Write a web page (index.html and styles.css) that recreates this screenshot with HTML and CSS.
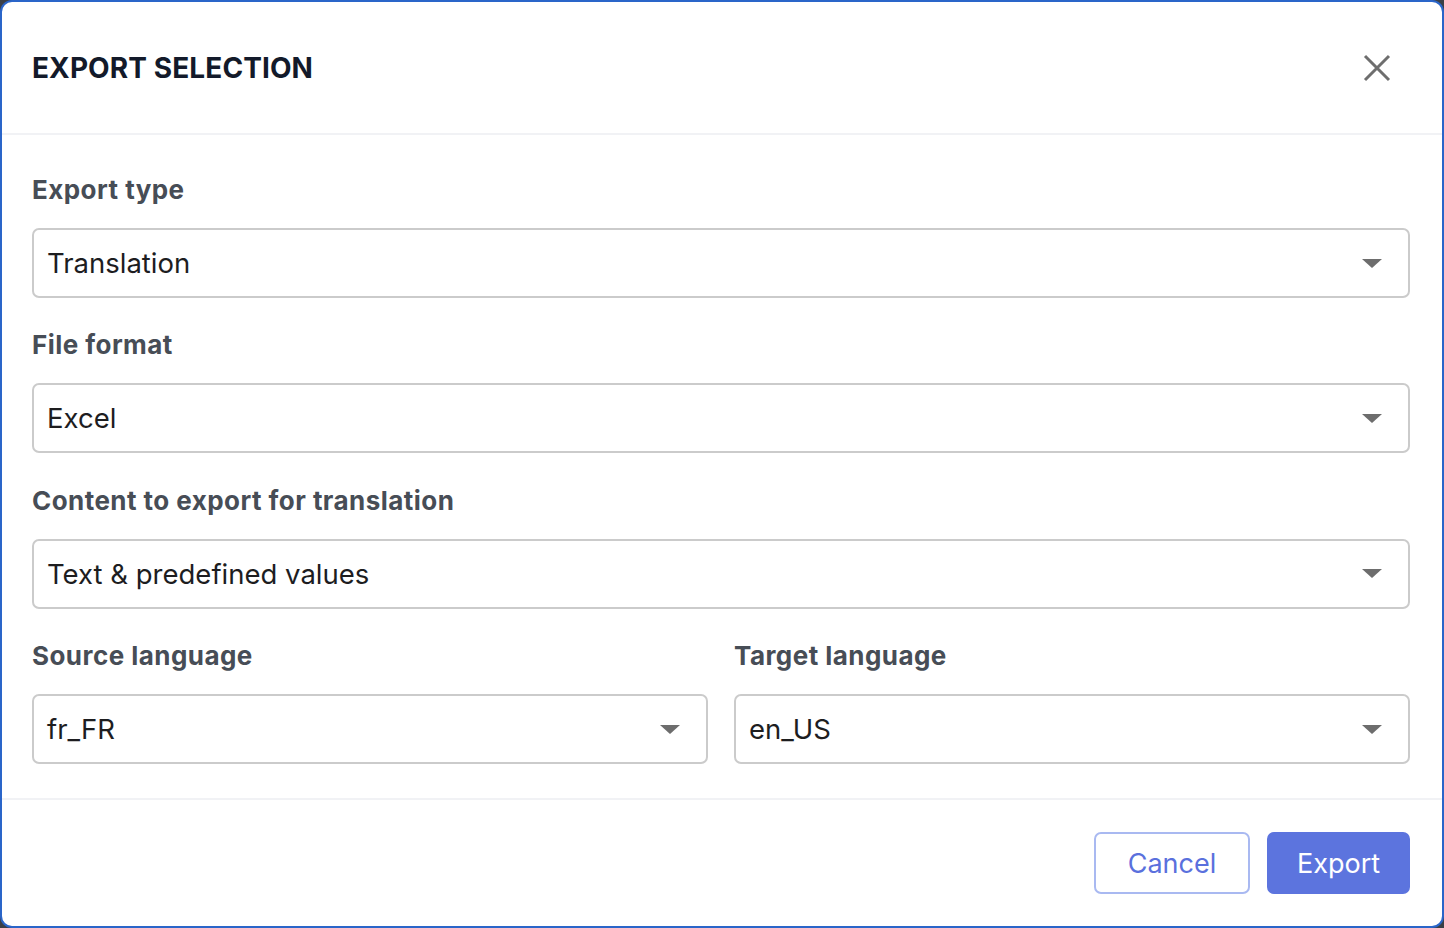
FILE: index.html
```html
<!DOCTYPE html>
<html lang="en">
<head>
<meta charset="utf-8">
<title>Export selection</title>
<link rel="stylesheet" href="styles.css">
</head>
<body>
<div class="dialog">
  <header class="dialog-header">
    <h1 class="dialog-title">EXPORT SELECTION</h1>
    <button class="close-btn" aria-label="Close">
      <svg width="28" height="28" viewBox="0 0 28 28"><path d="M2 2 L26 26 M26 2 L2 26" stroke="#6e6e6e" stroke-width="3" fill="none"/></svg>
    </button>
  </header>
  <main class="dialog-body">
    <div class="field">
      <label class="field-label">Export type</label>
      <div class="select"><span class="select-value">Translation</span><span class="caret"></span></div>
    </div>
    <div class="field">
      <label class="field-label">File format</label>
      <div class="select"><span class="select-value">Excel</span><span class="caret"></span></div>
    </div>
    <div class="field">
      <label class="field-label">Content to export for translation</label>
      <div class="select"><span class="select-value">Text &amp; predefined values</span><span class="caret"></span></div>
    </div>
    <div class="field-row">
      <div class="field">
        <label class="field-label">Source language</label>
        <div class="select"><span class="select-value">fr_FR</span><span class="caret"></span></div>
      </div>
      <div class="field">
        <label class="field-label">Target language</label>
        <div class="select"><span class="select-value">en_US</span><span class="caret"></span></div>
      </div>
    </div>
  </main>
  <footer class="dialog-footer">
    <button class="btn btn-secondary">Cancel</button>
    <button class="btn btn-primary">Export</button>
  </footer>
</div>
</body>
</html>
```
FILE: styles.css
```css
* { box-sizing: border-box; }
html { background: #3b3f46; }
body {
  margin: 0;
  width: 1444px;
  height: 928px;
  font-family: Inter, "Open Sans", sans-serif;
}
.dialog {
  width: 1444px;
  height: 928px;
  background: #fff;
  border: 2px solid #2a65c9;
  border-radius: 12px;
  display: flex;
  flex-direction: column;
}
.dialog-header {
  height: 133px;
  display: flex;
  align-items: center;
  justify-content: space-between;
  padding: 0 51px 0 30px;
  border-bottom: 2px solid #f1f2f5;
}
.dialog-title {
  margin: 0;
  font-size: 28px;
  font-weight: 700;
  color: #131a2a;
  letter-spacing: 0.1px;
}
.close-btn {
  background: none;
  border: 0;
  padding: 0;
  width: 28px;
  height: 28px;
  display: flex;
}
.dialog-body {
  padding: 38px 32px 34px 30px;
  display: flex;
  flex-direction: column;
  gap: 30.4px;
  border-bottom: 2px solid #f1f2f5;
}
.field {
  display: flex;
  flex-direction: column;
  gap: 22px;
  flex: 1;
}
.field-row {
  display: flex;
  gap: 26px;
}
.field-label {
  font-size: 26px;
  font-weight: 700;
  line-height: 33px;
  letter-spacing: 0.45px;
  color: #474d56;
}
.select {
  height: 70px;
  border: 2px solid #cbcbcb;
  border-radius: 7px;
  display: flex;
  align-items: center;
  justify-content: space-between;
  padding: 0 26px 0 13px;
}
.select-value {
  font-size: 27.5px;
  color: #1d1d1f;
}
.caret {
  width: 0;
  height: 0;
  border-left: 10px solid transparent;
  border-right: 10px solid transparent;
  border-top: 9px solid #6d6d6d;
}
.dialog-footer {
  flex: 1;
  display: flex;
  justify-content: flex-end;
  align-items: center;
  gap: 17px;
  padding: 0 32px 0 0;
}
.btn {
  height: 62px;
  border-radius: 7px;
  font-family: Inter, "Open Sans", sans-serif;
  font-size: 27px;
  padding: 0;
}
.btn-secondary {
  width: 156px;
  background: #fff;
  border: 2px solid #a9b9f1;
  color: #5a70dd;
}
.btn-primary {
  width: 143px;
  background: #5c74de;
  border: 2px solid #5c74de;
  color: #fff;
}
```
